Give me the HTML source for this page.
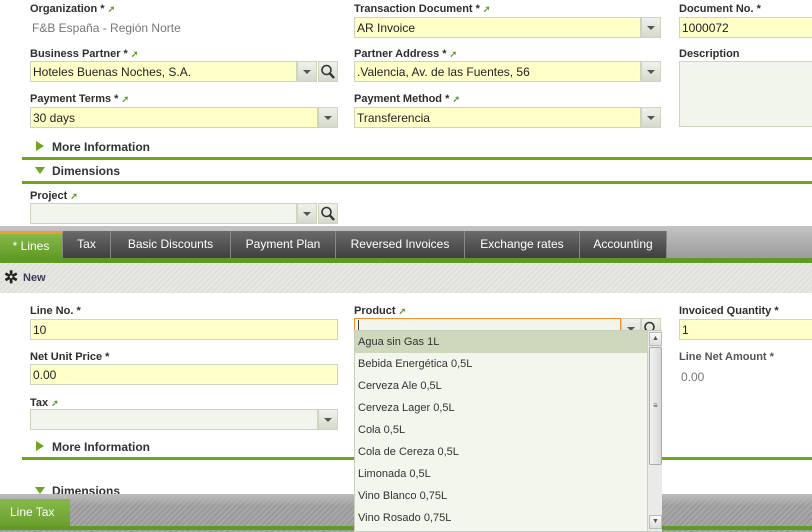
<!DOCTYPE html>
<html><head><meta charset="utf-8"><style>
*{box-sizing:border-box;margin:0;padding:0}
body{width:812px;height:532px;overflow:hidden;background:#fff;font-family:"Liberation Sans",Arial,sans-serif;position:relative;font-size:12px}
.a{position:absolute}
.lbl{position:absolute;font-weight:bold;font-size:11px;color:#2e2e2e;white-space:nowrap}
.lk{color:#5e9a22;font-size:9px;margin-left:3px;font-weight:bold}
.in{position:absolute;height:21px;background:#ffffc8;border:1px solid #cdd5bc;font-size:12px;color:#222;padding:3px 2px;white-space:nowrap;overflow:hidden}
.g{background:#f2f5eb}
.dd{position:absolute;width:20px;height:21px;background:linear-gradient(#f0f2ea,#d6dacb);border:1px solid #cdd5bc}
.dd:after{content:"";position:absolute;left:5px;top:8px;border-left:4px solid transparent;border-right:4px solid transparent;border-top:4px solid #555}
.sr{position:absolute;width:20px;height:21px;background:linear-gradient(#f0f2ea,#d6dacb);border:1px solid #cdd5bc}
.sec{position:absolute;font-weight:bold;font-size:12px;color:#333}
.tri{position:absolute;width:0;height:0}
.hl{position:absolute;height:3px;background:#6ea51c}
.tab{position:absolute;top:231px;height:28px;color:#fff;font-size:12px;text-align:center;line-height:27px;background:linear-gradient(#6a6a6a,#3e3e3e);border-right:1px solid #888}
.it{height:22px;line-height:22px;padding-left:3px;font-size:11px;color:#333}
</style></head><body>
<div class="lbl" style="left:30px;top:3px">Organization *<span class="lk">➚</span></div>
<div class="a" style="left:32px;top:21px;color:#777;font-size:12px">F&amp;B España - Región Norte</div>
<div class="lbl" style="left:354px;top:3px">Transaction Document *<span class="lk">➚</span></div>
<div class="in" style="left:354px;top:17px;width:287px">AR Invoice</div><div class="dd" style="left:641px;top:17px"></div>
<div class="lbl" style="left:679px;top:3px">Document No. *</div>
<div class="in" style="left:679px;top:17px;width:140px">1000072</div>
<div class="lbl" style="left:30px;top:48px">Business Partner *<span class="lk">➚</span></div>
<div class="in" style="left:30px;top:61px;width:267px">Hoteles Buenas Noches, S.A.</div><div class="dd" style="left:297px;top:61px"></div>
<div class="sr" style="left:318px;top:61px"><svg width="18" height="19"><circle cx="7.5" cy="8" r="4.5" fill="none" stroke="#333" stroke-width="1.6"/><line x1="10.5" y1="11" x2="15" y2="16" stroke="#333" stroke-width="2.4"/></svg></div>
<div class="lbl" style="left:354px;top:48px">Partner Address *<span class="lk">➚</span></div>
<div class="in" style="left:354px;top:61px;width:287px">.Valencia, Av. de las Fuentes, 56</div><div class="dd" style="left:641px;top:61px"></div>
<div class="lbl" style="left:679px;top:48px">Description</div>
<div class="in g" style="left:679px;top:61px;width:140px;height:66px"></div>
<div class="lbl" style="left:30px;top:93px">Payment Terms *<span class="lk">➚</span></div>
<div class="in" style="left:30px;top:107px;width:288px">30 days</div><div class="dd" style="left:318px;top:107px"></div>
<div class="lbl" style="left:354px;top:93px">Payment Method *<span class="lk">➚</span></div>
<div class="in" style="left:354px;top:107px;width:287px">Transferencia</div><div class="dd" style="left:641px;top:107px"></div>
<div class="tri" style="left:36px;top:141px;border-top:5px solid transparent;border-bottom:5px solid transparent;border-left:8px solid #6ea51c"></div>
<div class="sec" style="left:52px;top:140px">More Information</div>
<div class="hl" style="left:22px;top:157px;width:790px"></div>
<div class="tri" style="left:35px;top:167px;border-left:5px solid transparent;border-right:5px solid transparent;border-top:7px solid #6ea51c"></div>
<div class="sec" style="left:52px;top:164px">Dimensions</div>
<div class="hl" style="left:22px;top:181px;width:790px"></div>
<div class="lbl" style="left:30px;top:190px">Project<span class="lk">➚</span></div>
<div class="in g" style="left:30px;top:203px;width:267px"></div><div class="dd" style="left:297px;top:203px"></div>
<div class="sr" style="left:318px;top:203px"><svg width="18" height="19"><circle cx="7.5" cy="8" r="4.5" fill="none" stroke="#333" stroke-width="1.6"/><line x1="10.5" y1="11" x2="15" y2="16" stroke="#333" stroke-width="2.4"/></svg></div>
<div class="a" style="left:0;top:226px;width:812px;height:33px;background:linear-gradient(#c4c4c4,#9a9a9a)"></div>
<div class="tab" style="left:0;width:63px;background:linear-gradient(#86b94a,#5f9a22);border-top:3px solid #f59b2f;line-height:24px">* Lines</div>
<div class="tab" style="left:63px;width:48px">Tax</div>
<div class="tab" style="left:111px;width:120px">Basic Discounts</div>
<div class="tab" style="left:231px;width:105px">Payment Plan</div>
<div class="tab" style="left:336px;width:129px">Reversed Invoices</div>
<div class="tab" style="left:465px;width:115px">Exchange rates</div>
<div class="tab" style="left:580px;width:87px">Accounting</div>
<div class="a" style="left:0;top:258px;width:812px;height:5px;background:#5f9a22"></div>
<div class="a" style="left:0;top:263px;width:812px;height:30px;background:repeating-linear-gradient(135deg,#e8e9e3 0 2px,#dfe0d9 2px 4px)"></div>
<div class="a" style="left:4px;top:268px;font-size:17px;font-weight:bold;color:#222">✲</div>
<div class="a" style="left:23px;top:272px;font-size:11px;font-weight:bold;color:#3a3a5a">New</div>
<div class="lbl" style="left:30px;top:305px">Line No. *</div>
<div class="in" style="left:30px;top:319px;width:308px">10</div>
<div class="lbl" style="left:354px;top:305px">Product<span class="lk">➚</span></div>
<div class="in g" style="left:354px;top:318px;width:267px;border-color:#f09030;padding:0 2px;font-size:11px">|</div><div class="dd" style="left:621px;top:318px"></div>
<div class="sr" style="left:641px;top:318px"><svg width="18" height="19"><circle cx="7.5" cy="8" r="4.5" fill="none" stroke="#333" stroke-width="1.6"/></svg></div>
<div class="lbl" style="left:679px;top:305px">Invoiced Quantity *</div>
<div class="in" style="left:679px;top:319px;width:140px">1</div>
<div class="lbl" style="left:30px;top:351px">Net Unit Price *</div>
<div class="in" style="left:30px;top:364px;width:308px">0.00</div>
<div class="lbl" style="left:679px;top:351px;color:#555">Line Net Amount *</div>
<div class="a" style="left:681px;top:370px;color:#777;font-size:12px">0.00</div>
<div class="lbl" style="left:30px;top:397px">Tax<span class="lk">➚</span></div>
<div class="in g" style="left:30px;top:409px;width:288px"></div><div class="dd" style="left:318px;top:409px"></div>
<div class="tri" style="left:36px;top:441px;border-top:5px solid transparent;border-bottom:5px solid transparent;border-left:8px solid #6ea51c"></div>
<div class="sec" style="left:52px;top:440px">More Information</div>
<div class="hl" style="left:22px;top:457px;width:790px"></div>
<div class="tri" style="left:35px;top:487px;border-left:5px solid transparent;border-right:5px solid transparent;border-top:7px solid #6ea51c"></div>
<div class="sec" style="left:52px;top:484px">Dimensions</div>
<div class="a" style="left:0;top:494px;width:812px;height:38px;background:repeating-linear-gradient(135deg,#a8a8a8 0 2px,#999 2px 4px)"></div>
<div class="a" style="left:0;top:494px;width:812px;height:12px;background:linear-gradient(#bdbdbd,rgba(170,170,170,0))"></div>
<div class="a" style="left:0;top:499px;width:70px;height:27px;background:linear-gradient(#86b94a,#6a9f2e);color:#fff;font-size:12px;line-height:27px;padding-left:10px">Line Tax</div>
<div class="a" style="left:0;top:526px;width:812px;height:4px;background:#5f9a22"></div>
<div class="a" style="left:354px;top:330px;width:308px;height:202px;background:#f3f6ec;border:1px solid #c8cfbb">
<div class="it" style="background:#cdd8bd">Agua sin Gas 1L</div>
<div class="it">Bebida Energética 0,5L</div>
<div class="it">Cerveza Ale 0,5L</div>
<div class="it">Cerveza Lager 0,5L</div>
<div class="it">Cola 0,5L</div>
<div class="it">Cola de Cereza 0,5L</div>
<div class="it">Limonada 0,5L</div>
<div class="it">Vino Blanco 0,75L</div>
<div class="it">Vino Rosado 0,75L</div>
<div class="a" style="left:292px;top:0;width:15px;height:200px;background:#eaeaea;border-left:1px solid #ccc">
<div class="a" style="left:1px;top:1px;width:13px;height:14px;background:linear-gradient(#fafafa,#ddd);border:1px solid #bbb;font-size:7px;text-align:center;line-height:12px;color:#555">▲</div>
<div class="a" style="left:1px;top:16px;width:13px;height:118px;background:linear-gradient(90deg,#f3f3f3,#d8d8d8);border:1px solid #aaa;border-radius:2px;font-size:8px;text-align:center;line-height:116px;color:#555">≡</div>
<div class="a" style="left:1px;top:184px;width:13px;height:14px;background:linear-gradient(#fafafa,#ddd);border:1px solid #bbb;font-size:7px;text-align:center;line-height:12px;color:#555">▼</div>
</div>
</div>
</body></html>
